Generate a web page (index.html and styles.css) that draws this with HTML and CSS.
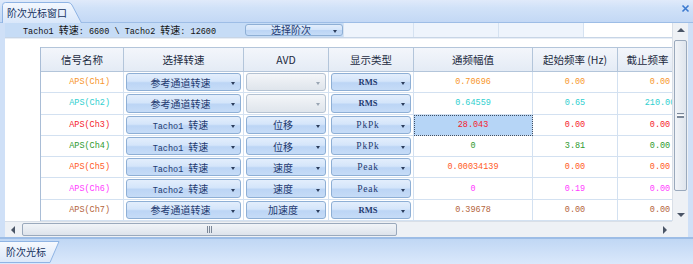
FILE: index.html
```html
<!DOCTYPE html>
<html>
<head>
<meta charset="utf-8">
<link rel="stylesheet" href="styles.css">
</head>
<body>
<div class="win">
  <div class="titlebar">
    <div class="tab tab-top">
      <svg class="tab-shape" viewBox="0 0 80 21" preserveAspectRatio="none"><defs><linearGradient id="tg" x1="0" y1="0" x2="0" y2="1"><stop offset="0" stop-color="#f4f8fe"/><stop offset="1" stop-color="#d9e7fa"/></linearGradient></defs><path d="M0.5 21 V3.5 Q0.5 0.5 3.5 0.5 H66 Q68.5 0.5 70 3 L79.5 21" fill="url(#tg)" stroke="#8fb4e4"/></svg>
      <span class="tab-label">阶次光标窗口</span>
    </div>
    <svg class="close" width="9" height="9" viewBox="0 0 9 9"><path d="M1.5 1.5 L7.5 7.5 M7.5 1.5 L1.5 7.5" stroke="#3c7ad0" stroke-width="1.6"/></svg>
  </div>
  <div class="panel">
    <div class="content">
      <div class="info">
        <div class="info-text">Tacho1 <span class="cj">转速</span>: 6600 \ Tacho2 <span class="cj">转速</span>: 12600</div>
        <div class="info-combo"><div class="combo combo-order"><span>选择阶次</span><i class="arrow"></i></div></div>
        <div class="info-cell w70"></div>
        <div class="info-cell w85"></div>
        <div class="info-cell w85"></div>
        <div class="info-white"></div>
      </div>
      <div class="body">
        <div class="rowhdr"></div>
        <div class="grid">
          <div class="hd">信号名称</div><div class="hd">选择转速</div><div class="hd">AVD</div><div class="hd">显示类型</div><div class="hd">通频幅值</div><div class="hd">起始频率 (Hz)</div><div class="hd hd-last">截止频率</div>

          <div class="c name c1">APS(Ch1)</div>
          <div class="c cb"><div class="combo"><span class="cj">参考通道转速</span><i class="arrow"></i></div></div>
          <div class="c cb"><div class="combo combo-off"><span></span><i class="arrow"></i></div></div>
          <div class="c cb"><div class="combo"><span class="ty ty-rms">RMS</span><i class="arrow"></i></div></div>
          <div class="c num c1">0.70696</div><div class="c num c1">0.00</div><div class="c num c1">0.00</div>

          <div class="c name c2">APS(Ch2)</div>
          <div class="c cb"><div class="combo"><span class="cj">参考通道转速</span><i class="arrow"></i></div></div>
          <div class="c cb"><div class="combo combo-off"><span></span><i class="arrow"></i></div></div>
          <div class="c cb"><div class="combo"><span class="ty ty-rms">RMS</span><i class="arrow"></i></div></div>
          <div class="c num c2">0.64559</div><div class="c num c2">0.65</div><div class="c num c2">210.00</div>

          <div class="c name c3">APS(Ch3)</div>
          <div class="c cb"><div class="combo"><span>Tacho1 <span class="cj">转速</span></span><i class="arrow"></i></div></div>
          <div class="c cb"><div class="combo"><span class="cj">位移</span><i class="arrow"></i></div></div>
          <div class="c cb"><div class="combo"><span class="ty">PkPk</span><i class="arrow"></i></div></div>
          <div class="c num c3 sel">28.043</div><div class="c num c3">0.00</div><div class="c num c3">0.00</div>

          <div class="c name c4">APS(Ch4)</div>
          <div class="c cb"><div class="combo"><span>Tacho1 <span class="cj">转速</span></span><i class="arrow"></i></div></div>
          <div class="c cb"><div class="combo"><span class="cj">位移</span><i class="arrow"></i></div></div>
          <div class="c cb"><div class="combo"><span class="ty">PkPk</span><i class="arrow"></i></div></div>
          <div class="c num c4">0</div><div class="c num c4">3.81</div><div class="c num c4">0.00</div>

          <div class="c name c5">APS(Ch5)</div>
          <div class="c cb"><div class="combo"><span>Tacho1 <span class="cj">转速</span></span><i class="arrow"></i></div></div>
          <div class="c cb"><div class="combo"><span class="cj">速度</span><i class="arrow"></i></div></div>
          <div class="c cb"><div class="combo"><span class="ty">Peak</span><i class="arrow"></i></div></div>
          <div class="c num c5">0.00034139</div><div class="c num c5">0.00</div><div class="c num c5">0.00</div>

          <div class="c name c6">APS(Ch6)</div>
          <div class="c cb"><div class="combo"><span>Tacho2 <span class="cj">转速</span></span><i class="arrow"></i></div></div>
          <div class="c cb"><div class="combo"><span class="cj">速度</span><i class="arrow"></i></div></div>
          <div class="c cb"><div class="combo"><span class="ty">Peak</span><i class="arrow"></i></div></div>
          <div class="c num c6">0</div><div class="c num c6">0.19</div><div class="c num c6">0.00</div>

          <div class="c name c7">APS(Ch7)</div>
          <div class="c cb"><div class="combo"><span class="cj">参考通道转速</span><i class="arrow"></i></div></div>
          <div class="c cb"><div class="combo"><span class="cj">加速度</span><i class="arrow"></i></div></div>
          <div class="c cb"><div class="combo"><span class="ty ty-rms">RMS</span><i class="arrow"></i></div></div>
          <div class="c num c7">0.39678</div><div class="c num c7">0.00</div><div class="c num c7">0.00</div>
        </div>
      </div>
    </div>
    <div class="vscroll">
      <i class="sarrow up"></i>
      <div class="vthumb"><i class="grip-h"></i></div>
      <i class="sarrow down"></i>
    </div>
    <div class="hscroll">
      <i class="sarrow left"></i>
      <div class="hthumb"><i class="grip-v"></i></div>
      <i class="sarrow right"></i>
    </div>
    <div class="corner"></div>
  </div>
  <div class="bottombar">
    <div class="tab tab-bottom">
      <svg class="tab-shape" viewBox="0 0 60 22" preserveAspectRatio="none"><defs><linearGradient id="bg2" x1="0" y1="0" x2="0" y2="1"><stop offset="0" stop-color="#f6f9fe"/><stop offset="1" stop-color="#dce8f9"/></linearGradient></defs><path d="M0 0.5 H59 L50 21.5 H0" fill="url(#bg2)" stroke="#8fb4e4"/></svg>
      <span class="tab-label">阶次光标</span>
    </div>
  </div>
</div>
</body>
</html>
```

FILE: styles.css
```css
* { box-sizing: border-box; }
html, body { margin: 0; padding: 0; }
body {
  width: 693px;
  height: 264px;
  overflow: hidden;
  font-family: "Noto Sans CJK SC", sans-serif;
  background: #cfe0f7;
}
.win {
  display: flex;
  flex-direction: column;
  height: 264px;
}
.titlebar {
  height: 23px;
  display: flex;
  align-items: flex-end;
  justify-content: space-between;
  padding: 0 2px 0 2px;
  background: linear-gradient(#e0eafa 0%, #d1e2f8 35%, #c3d8f5 100%);
  border-bottom: 1px solid #9dbde6;
}
.tab {
  position: relative;
  display: flex;
  align-items: center;
}
.tab-shape {
  position: absolute;
  left: 0;
  top: 0;
  width: 100%;
  height: 100%;
}
.tab-label {
  position: relative;
  font-size: 10px;
  color: #15315e;
  line-height: 1;
}
.tab-top {
  width: 80px;
  height: 21px;
  padding-left: 5px;
  margin-bottom: -1px;
}
.close {
  align-self: flex-start;
  margin-top: 4px;
  margin-right: 1px;
}
.panel {
  display: grid;
  grid-template-columns: 667px 16px;
  grid-template-rows: 198px 16px;
  margin: 0 5px 0 5px;
  background: #fff;
}
.content {
  overflow: hidden;
  display: flex;
  flex-direction: column;
  background: #fff;
}
.info {
  display: flex;
  height: 15px;
  flex: none;
  border-bottom: 1px solid #c7d5e6;
}
.info-text {
  width: 240px;
  background: #c6dcf6;
  padding-left: 18px;
  font-family: "Liberation Mono", monospace;
  font-size: 8.5px;
  line-height: 14px;
  color: #111;
  white-space: nowrap;
}
.cj {
  font-family: "Noto Sans CJK SC", sans-serif;
  font-size: 10px;
}
.info-combo {
  width: 98px;
  background: #c6dcf6;
  padding: 1px 0 1px 0;
}
.info-cell {
  background: #eef4fc;
  border-left: 1px solid #d5e2f1;
}
.w70 { width: 70px; }
.w85 { width: 85px; }
.info-white {
  flex: 1;
  background: #fff;
  border-left: 1px solid #d5e2f1;
}
.body {
  display: flex;
  padding-top: 8px;
  border-top: 1px solid #e8eef6;
}
.rowhdr {
  width: 35px;
  flex: none;
}
.grid {
  display: grid;
  grid-template-columns: 83px 120px 85px 85px 119px 85px 85px;
  grid-template-rows: 25px;
  grid-auto-rows: 21.3px;
  flex: none;
  border-left: 1px solid #a9bdd6;
}
.hd {
  display: flex;
  align-items: center;
  justify-content: center;
  font-size: 10.5px;
  color: #1c2a40;
  background: linear-gradient(#f3f6fb, #e4ebf5);
  border-right: 1px solid #b3c5da;
  border-bottom: 1px solid #b3c5da;
  border-top: 1px solid #b3c5da;
  white-space: nowrap;
}
.hd-last {
  padding-right: 25px;
}
.c {
  display: flex;
  align-items: center;
  border-right: 1px solid #d3e1f1;
  border-bottom: 1px solid #d3e1f1;
  font-family: "Liberation Mono", monospace;
  font-size: 8.5px;
  white-space: nowrap;
  overflow: hidden;
}
.name {
  justify-content: flex-end;
  padding-right: 13px;
}
.num { justify-content: center; }
.sel {
  background: #b6d5f6;
  outline: 1px dotted #3d4f66;
  outline-offset: -1px;
}
.cb { padding: 1px 2px 1px 2px; }
.combo {
  position: relative;
  flex: 1;
  height: 100%;
  display: flex;
  align-items: center;
  justify-content: center;
  border: 1px solid #8eafd5;
  border-radius: 3px;
  background: linear-gradient(#e3eefc 0%, #d4e5fa 45%, #bcd5f5 55%, #c6dcf7 100%);
  color: #1f3a70;
  font-family: "Liberation Mono", monospace;
  font-size: 8.5px;
  padding-right: 6px;
}
.combo .cj { color: #1f3a70; }
.combo-off {
  border-color: #b4c2d2;
  background: linear-gradient(#f4f6f9 0%, #e9edf2 50%, #dfe5ec 100%);
}
.combo-off .arrow { border-top-color: #9aa6b4; }
.combo-order {
  height: 12px;
  color: #1f3a70;
}
.combo-order span {
  font-family: "Noto Sans CJK SC", sans-serif;
  font-size: 10px;
  line-height: 1;
}
.arrow {
  position: absolute;
  right: 5px;
  top: 50%;
  margin-top: 0px;
  width: 0;
  height: 0;
  border-left: 2.5px solid transparent;
  border-right: 2.5px solid transparent;
  border-top: 3px solid #2b3d5c;
}
.ty {
  font-family: "Liberation Serif", serif;
  font-size: 9.5px;
  letter-spacing: 0.8px;
  color: #1f3a70;
}
.ty-rms { font-size: 8.5px; letter-spacing: 0; font-weight: bold; }
.c1 { color: #f7962b; }
.c2 { color: #2fcfcf; }
.c3 { color: #f5222d; }
.c4 { color: #2e9a2e; }
.c5 { color: #ff5a1f; }
.c6 { color: #ff3cff; }
.c7 { color: #b4643c; }

.vscroll {
  display: flex;
  flex-direction: column;
  align-items: center;
  background: #eef1f5;
  border-left: 1px solid #d9dfe7;
  padding: 5px 1px 2px 1px;
}
.vthumb {
  width: 13px;
  height: 151px;
  margin-top: 8px;
  border: 1px solid #9aa9bc;
  border-radius: 2px;
  background: linear-gradient(90deg, #f1f4f8, #dfe5ed);
  display: flex;
  align-items: center;
  justify-content: center;
}
.grip-h {
  width: 7px;
  height: 5px;
  border-top: 1px solid #7b8798;
  border-bottom: 1px solid #7b8798;
  background: linear-gradient(#fff 0 1px, #7b8798 1px 2px, #fff 2px) ;
  background-size: 100% 3px;
  background-position: 0 1px;
  background-repeat: no-repeat;
}
.vscroll .down { margin-top: auto; margin-bottom: 2px; }
.sarrow {
  display: block;
  width: 0;
  height: 0;
}
.up {
  border-left: 4px solid transparent;
  border-right: 4px solid transparent;
  border-bottom: 4px solid #4a5566;
}
.down {
  border-left: 4px solid transparent;
  border-right: 4px solid transparent;
  border-top: 4px solid #4a5566;
}
.hscroll {
  display: flex;
  align-items: center;
  background: #eef1f5;
  border-top: 1px solid #d9dfe7;
  padding: 0 5px 0 6px;
}
.left {
  border-top: 4px solid transparent;
  border-bottom: 4px solid transparent;
  border-right: 4px solid #4a5566;
}
.right {
  border-top: 4px solid transparent;
  border-bottom: 4px solid transparent;
  border-left: 4px solid #4a5566;
  margin-left: auto;
}
.hthumb {
  margin-left: 7px;
  width: 375px;
  height: 13px;
  border: 1px solid #9aa9bc;
  border-radius: 2px;
  background: linear-gradient(#f1f4f8, #dde3eb);
  display: flex;
  align-items: center;
  justify-content: center;
}
.grip-v {
  width: 5px;
  height: 7px;
  border-left: 1px solid #7b8798;
  border-right: 1px solid #7b8798;
  background: linear-gradient(90deg, transparent 1px, #7b8798 1px 2px, transparent 2px);
}
.corner {
  background: #eef1f5;
}
.bottombar {
  flex: 1;
  border-top: 2px solid #9dbde6;
  background: linear-gradient(#c0d7f4, #dae8fb);
  padding-top: 2px;
}
.tab-bottom {
  width: 60px;
  height: 22px;
  padding-left: 6px;
}
```
